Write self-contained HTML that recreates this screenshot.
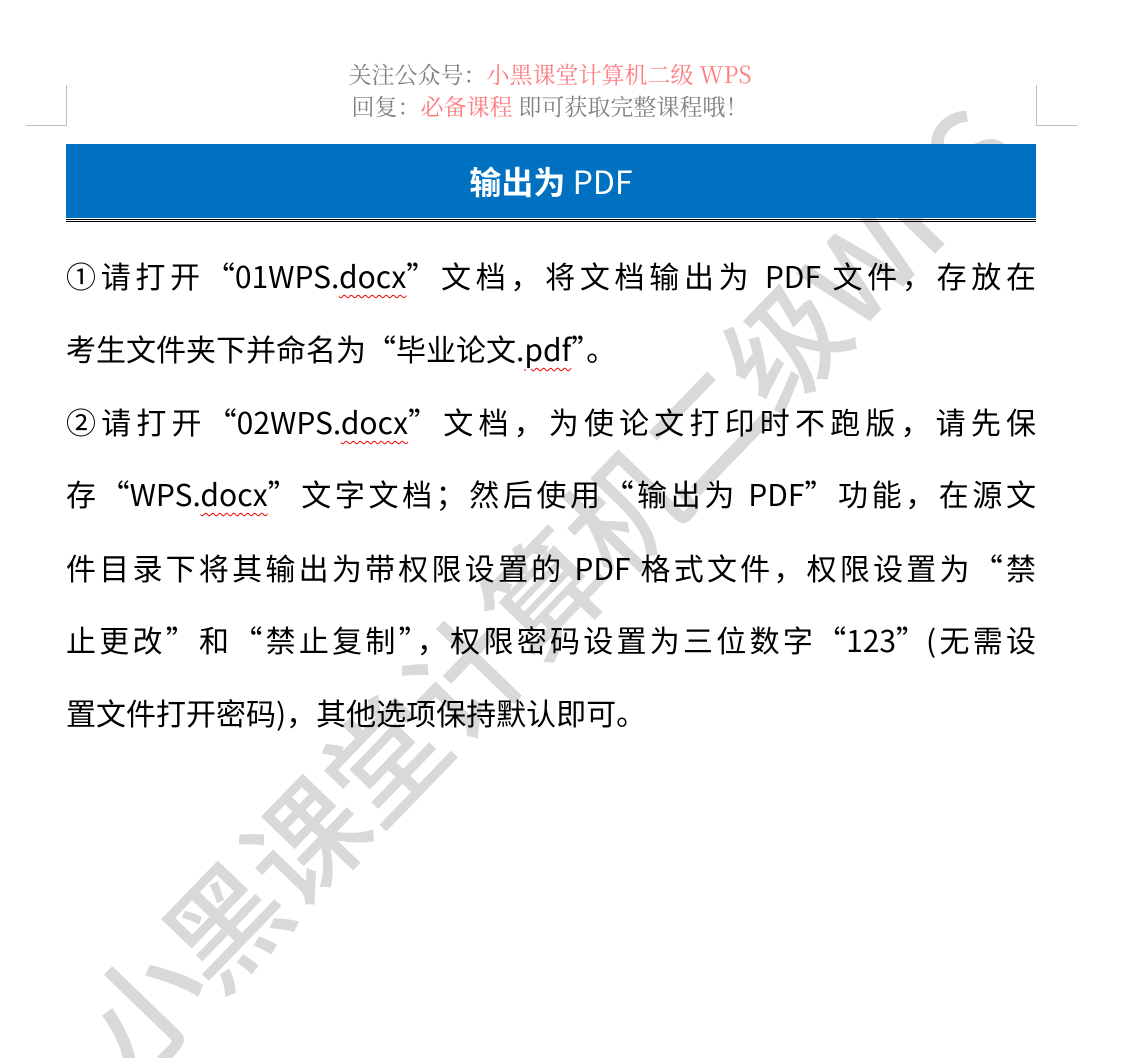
<!DOCTYPE html>
<html style="width:1124px;height:1058px;overflow:hidden"><head><meta charset="utf-8"><style>
body{margin:0;width:1124px;height:1058px;background:#fff;position:relative;overflow:hidden;font-family:"Noto Sans CJK SC","Liberation Sans",sans-serif}
.clip{position:absolute;left:0;top:0;width:1124px;height:1058px;overflow:hidden}
.wm{position:absolute;left:545px;top:585px;transform:translate(-50%,-50%) rotate(-46deg);font-size:117px;line-height:117px;color:#d9d9d9;white-space:nowrap;font-family:"Noto Sans CJK SC",sans-serif;font-weight:500;letter-spacing:-2px}
.hd{position:absolute;left:0;width:1100px;text-align:center;font-family:"Noto Serif CJK SC","Liberation Serif",serif;font-size:23px;line-height:28px;color:#808080}
.pk{color:#ff7c80}
.cm{position:absolute;background:#bfbfbf}
.bar{position:absolute;left:66px;top:144px;width:970px;height:74px;background:#0070c0;color:#fff;text-align:center;font-size:32px;line-height:74px;font-weight:bold}
.ln{position:absolute;left:66px;width:970px;font-size:30px;color:#000;text-align:justify;text-align-last:justify;white-space:nowrap;height:40px;line-height:40px}
.ln.l{text-align-last:left}
.u{text-decoration:underline wavy #e00;text-decoration-thickness:1px;text-underline-offset:6px}
</style></head><body>
<div class="clip"><div class="wm">小黑课堂计算机二级WPS</div></div>
<div class="hd" style="top:60px">关注公众号：<span class="pk">小黑课堂计算机二级 WPS</span></div>
<div class="hd" style="top:92px">回复：<span class="pk">必备课程</span> 即可获取完整课程哦！</div>
<div class="cm" style="left:66px;top:85px;width:1px;height:40px"></div>
<div class="cm" style="left:26px;top:125px;width:41px;height:1px"></div>
<div class="cm" style="left:1036px;top:85px;width:1px;height:40px"></div>
<div class="cm" style="left:1036px;top:125px;width:41px;height:1px"></div>
<div class="bar">输出为 <span style="font-weight:normal">PDF</span></div>
<div style="position:absolute;left:66px;top:219px;width:970px;height:1px;background:#000"></div>
<div style="position:absolute;left:66px;top:221px;width:970px;height:1px;background:#000"></div>
<div class="ln" style="top:255px">①请打开“01WPS.<span class="u">docx</span>”文档，将文档输出为 PDF 文件，存放在</div>
<div class="ln l" style="top:328px">考生文件夹下并命名为“毕业论文.<span class="u">pdf</span>”。</div>
<div class="ln" style="top:401px">②请打开“02WPS.<span class="u">docx</span>”文档，为使论文打印时不跑版，请先保</div>
<div class="ln" style="top:473px">存“WPS.<span class="u">docx</span>”文字文档；然后使用“输出为 PDF”功能，在源文</div>
<div class="ln" style="top:547px">件目录下将其输出为带权限设置的 PDF 格式文件，权限设置为“禁</div>
<div class="ln" style="top:619px">止更改”和“禁止复制”，权限密码设置为三位数字“123”(无需设</div>
<div class="ln l" style="top:692px">置文件打开密码)，其他选项保持默认即可。</div>
</body></html>
